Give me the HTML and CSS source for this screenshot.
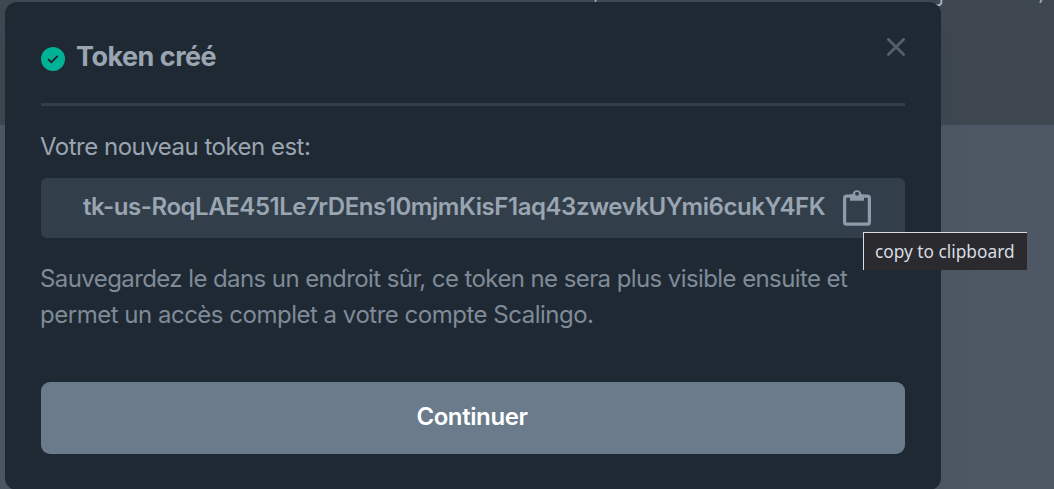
FILE: index.html
```html
<!DOCTYPE html>
<html lang="fr">
<head>
<meta charset="utf-8">
<title>Token créé</title>
<link rel="stylesheet" href="styles.css">
</head>
<body>
<div class="page">
  <div class="code-text"><span class="frag frag-a">,</span><span class="frag frag-b">j</span><span class="frag frag-c">,</span></div>
  <main class="modal">
    <header class="header">
      <svg class="check" viewBox="0 0 24 24"><circle cx="12" cy="12" r="12" fill="#00b295"/><path d="M7.7 12.6l2.6 2.6 5.9-5.8" fill="none" stroke="#1f2933" stroke-width="2" stroke-linecap="round" stroke-linejoin="round"/></svg>
      <h1 class="title">Token créé</h1>
      <svg class="close" viewBox="0 0 18 18"><path d="M1.4 1.4l15.2 15.2M16.6 1.4L1.4 16.6" fill="none" stroke="#52606d" stroke-width="2.8" stroke-linecap="round"/></svg>
    </header>
    <p class="label">Votre nouveau token est:</p>
    <div class="token-box">
      <span class="token">tk-us-RoqLAE451Le7rDEns10mjmKisF1aq43zwevkUYmi6cukY4FK</span>
      <span class="copy">
        <svg class="clipboard" viewBox="0 0 28 36"><rect x="1.6" y="6.2" width="24.8" height="28" rx="2" fill="none" stroke="#8f9ba8" stroke-width="3.2"/><path fill="#8f9ba8" fill-rule="evenodd" d="M7 4.6h2.6a4.4 4.4 0 0 1 8.8 0H21v6.2H7zM14 2.1a1.8 1.8 0 1 0 0 3.6 1.8 1.8 0 0 0 0-3.6z"/><circle cx="14" cy="3.9" r="1.8" fill="#323f4b"/></svg>
        <span class="tooltip">copy to clipboard</span>
      </span>
    </div>
    <p class="note"><span class="line line-one">Sauvegardez le dans un endroit sûr, ce token ne sera plus visible ensuite et</span><span class="line line-two">permet un accès complet a votre compte Scalingo.</span></p>
    <button class="button">Continuer</button>
  </main>
</div>
</body>
</html>
```
FILE: styles.css
```css
* { box-sizing: border-box; }
body { margin: 0; font-family: Inter, "Liberation Sans", sans-serif; }
.page {
  position: relative;
  width: 1054px;
  height: 489px;
  overflow: hidden;
  padding: 2px 0 0 5px;
  background: linear-gradient(#3f4851 0 125px, #4d5864 125px);
}
.modal {
  position: relative;
  width: 936px;
  height: 488px;
  padding: 36px;
  border-radius: 12px;
  background: #1f2933;
  box-shadow: 0 24px 36px rgba(31, 41, 51, .08);
}
.header {
  display: flex;
  height: 68px;
  border-bottom: 3px solid #323f4b;
}
.check { width: 24px; height: 24px; margin-top: 9px; }
.title {
  margin: 1px 0 0 11px;
  font-size: 27px;
  line-height: 36px;
  font-weight: 700;
  letter-spacing: -.5px;
  color: #9aa5b1;
  white-space: nowrap;
}
.close { width: 18px; height: 18px; margin: 0 0 0 auto; }
.label {
  margin: 23px 0 13px -1px;
  font-size: 24px;
  line-height: 36px;
  letter-spacing: -.5px;
  color: #9aa5b1;
}
.token-box {
  display: flex;
  align-items: center;
  height: 60px;
  padding: 0 34px 0 42px;
  border-radius: 6px;
  background: #323f4b;
}
.token {
  padding-bottom: 3px;
  font-size: 24px;
  font-weight: 600;
  letter-spacing: -.44px;
  white-space: nowrap;
  color: #9aa5b1;
  flex: 1;
  min-width: 0;
}
.copy { position: relative; width: 28px; height: 36px; }
.clipboard { display: block; width: 28px; height: 36px; }
.tooltip {
  position: absolute;
  left: 20px;
  top: 42px;
  width: 164px;
  height: 38px;
  padding-left: 11px;
  border: solid #dcdde0;
  border-width: 1px 0 0 1px;
  background: #2b2b2f;
  font: 17.3px/37px "Noto Sans", sans-serif;
  color: #d7dde3;
  white-space: nowrap;
}
.note {
  margin: 23px 0 49px -1px;
  font-size: 24px;
  line-height: 36px;
  color: #7f8b98;
}
.line { display: block; white-space: nowrap; letter-spacing: -.59px; }
.line-two { letter-spacing: -.49px; }
.button {
  display: block;
  width: 864px;
  height: 72px;
  padding: 0 2px 3px 0;
  border: 0;
  border-radius: 9px;
  background: #6b7b8b;
  font: 600 24px Inter, sans-serif;
  letter-spacing: -.4px;
  color: #fff;
}
.frag {
  position: absolute;
  font: 20px/24px "Liberation Mono", monospace;
  color: #9fb8d2;
}
.frag-a { left: 592px; top: -19px; }
.frag-b { left: 934px; top: -15px; }
.frag-c { left: 1037px; top: -18px; }
```
